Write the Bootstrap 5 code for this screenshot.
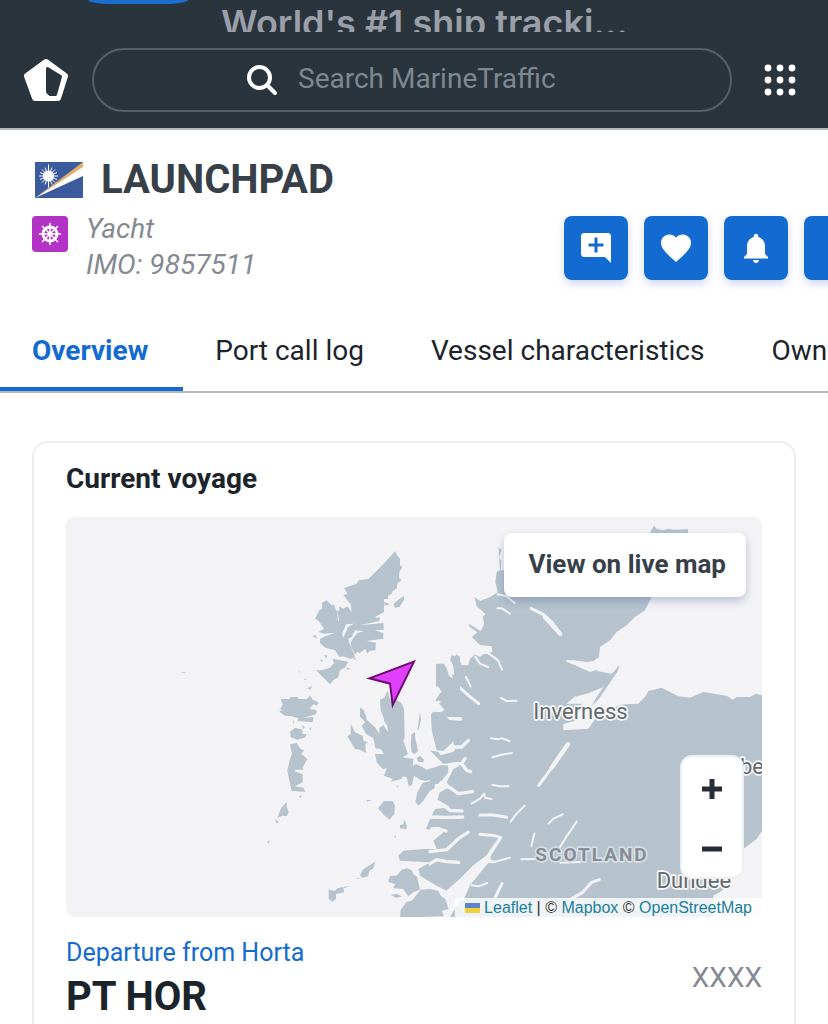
<!DOCTYPE html>
<html lang="en">
<head>
<meta charset="utf-8">
<meta name="viewport" content="width=device-width, initial-scale=1">
<title>LAUNCHPAD</title>
<link rel="stylesheet" href="https://cdn.jsdelivr.net/npm/bootstrap@5.3.0/dist/css/bootstrap.min.css">
<style>
  :root { --ink: #1b232b; --slate: #373f49; --muted-ink: #858a92; --brand: #136bd2; --header: #2a343d; }
  body { font-family: Roboto, "Liberation Sans", sans-serif; font-size: 28px; line-height: 36px; color: var(--ink); background: #fff; }
  svg { display: block; }
  .site-header { background: var(--header); border-bottom: 2px solid #b2b9bc; }
  .promo { height: 32px; }
  .promo-pill { width: 100px; height: 4px; margin-left: 88px; background: #1a6fd0; border-radius: 0 0 24px 24px / 0 0 4px 4px; }
  .promo-text { margin-left: 33px; padding-top: 3px; font: 600 36px/40px Inter, sans-serif; color: #9a9fa9; }
  .header-row { height: 96px; padding: 0 32px 0 24px; }
  .search-pill { height: 64px; margin: 0 32px 0 24px; padding-right: 12px; gap: 20px; border: 2px solid #56606a; }
  .search-pill input { width: 268px; height: 44px; padding: 0 0 4px; border: 0; outline: 0; background: transparent; color: #fff; }
  .search-pill input::placeholder { color: #7f8891; opacity: 1; }
  .plain-btn { padding: 0; border: 0; background: transparent; }
  .vessel { padding: 26px 0 28px 32px; }
  .vessel h1 { font-size: 40px; line-height: 48px; font-weight: 700; color: var(--slate); }
  .vessel-sub { margin-top: 7px; gap: 18px; }
  .vessel-info { font-style: italic; color: var(--muted-ink); }
  .vessel-type { margin-top: 5px; }
  .actions { flex: 0 0 264px; min-width: 0; gap: 16px; padding-top: 5px; }
  .action-btn { flex: 0 0 64px; height: 64px; padding: 0; border: 0; border-radius: 8px; background: var(--brand); color: #fff; box-shadow: 0 4px 8px rgba(40, 80, 190, .22); }
  .tabs { border-bottom: 2px solid #b4babb; }
  .tabs a { padding: 22px 35px 18px 32px; color: var(--ink); text-decoration: none; border-bottom: 4px solid transparent; line-height: 36px; }
  .tabs a.active { color: var(--brand); font-weight: 700; border-color: var(--brand); }
  .voyage { margin: 48px 32px 0; padding: 16px 32px; border: 2px solid #ebecef; border-bottom: 0; border-radius: 16px 16px 0 0; }
  .voyage h2 { font-size: 28px; line-height: 40px; font-weight: 700; margin: 0 0 18px; }
  .map-box { height: 400px; border-radius: 8px; background: #f3f3f5; }
  .land { fill: #b6c3cd; }
  .water-fill { fill: #f3f3f5; }
  .loch { fill: none; stroke: #f3f3f5; stroke-linecap: round; stroke-linejoin: round; }
  .place { font: 400 66px Roboto, sans-serif; fill: #64696f; stroke: #f6f7f8; stroke-width: 10px; paint-order: stroke; stroke-linejoin: round; }
  .region { font-weight: 700; font-size: 57px; letter-spacing: 6px; fill: #868d96; stroke: #d8dee3; }
  .live-map { top: 16px; right: 16px; height: 64px; padding: 0 20px 2px 24px; border: 0; border-radius: 8px; background: #fff; color: var(--slate); font-weight: 700; font-size: 26px; box-shadow: 0 4px 8px rgba(50, 70, 140, .28); }
  .zoom-box { right: 18px; bottom: 38px; width: 64px; height: 124px; border: 2px solid #edf0f3; border-radius: 12px; background: #fff; overflow: hidden; }
  .attribution { right: 0; bottom: 0; height: 19px; padding: 0 10px; gap: 4px; font: 16px/20px "Liberation Sans", sans-serif; color: #333; background: rgba(255, 255, 255, .8); }
  .attribution a { color: #1a7f9d; text-decoration: none; }
  .voyage-ports { padding-top: 18px; }
  .port-link { color: var(--brand); text-decoration: none; font-size: 25px; }
  .port-code { margin-top: 2px; font-size: 40px; line-height: 48px; font-weight: 700; }
  .port-next { color: var(--muted-ink); }
</style>
</head>
<body>
<div class="vh-100 overflow-hidden d-flex flex-column">
  <header class="site-header flex-shrink-0">
    <div class="promo d-flex align-items-start overflow-hidden text-nowrap">
      <span class="promo-pill flex-shrink-0"></span>
      <span class="promo-text">World's #1 ship tracki…</span>
    </div>
    <div class="header-row d-flex align-items-center">
      <a href="#" aria-label="Home">
        <svg width="44" height="44" viewBox="0 0 44 44"><path fill="#fff" stroke="#fff" stroke-width="6" stroke-linejoin="round" d="M22 4 41 18 34 40H11L3 18Z"/><path fill="#2a343d" stroke="#2a343d" stroke-width="3" stroke-linejoin="round" d="M23.500 10.500 36.500 18.500 31.500 36.500H26L23.500 34Z"/></svg>
      </a>
      <label class="search-pill rounded-pill flex-grow-1 d-flex align-items-center justify-content-center">
        <svg width="32" height="32" viewBox="0 0 32 32" fill="none" stroke="#fff" stroke-width="4" stroke-linecap="round"><circle cx="13.500" cy="13.500" r="10.500"/><path d="m21.500 21.500 7.500 7.500"/></svg>
        <input type="text" aria-label="Search MarineTraffic" placeholder="Search MarineTraffic">
      </label>
      <button type="button" class="plain-btn" aria-label="Apps">
        <svg width="32" height="32" viewBox="0 0 32 32" fill="#fff"><circle cx="4" cy="4" r="3.400"/><circle cx="16" cy="4" r="3.400"/><circle cx="28" cy="4" r="3.400"/><circle cx="4" cy="16" r="3.400"/><circle cx="16" cy="16" r="3.400"/><circle cx="28" cy="16" r="3.400"/><circle cx="4" cy="28" r="3.400"/><circle cx="16" cy="28" r="3.400"/><circle cx="28" cy="28" r="3.400"/></svg>
      </button>
    </div>
  </header>

  <section class="vessel flex-shrink-0">
    <div class="d-flex align-items-center gap-3">
      <svg width="53" height="40" viewBox="0 0 53 40" aria-label="Flag of the Marshall Islands"><path fill="#3c5b9e" d="M3 2h48v36H3z"/><path fill="#e0ad6a" d="M3 38 51 2v6Z"/><path fill="#fff" d="M3 38 51 7v9Z"/><circle cx="16.500" cy="16" r="5.500" fill="#fff"/><path stroke="#fff" stroke-width="1" d="M16.500 4.500v23M7 16h19M10 9.500l13 13M23 9.500l-13 13M13 7.500l7 17M20 7.500l-7 17M8 12.500l17 7M25 12.500l-17 7"/></svg>
      <h1 class="mb-0">LAUNCHPAD</h1>
    </div>
    <div class="vessel-sub d-flex align-items-start">
      <svg class="vessel-type flex-shrink-0" width="36" height="36" viewBox="0 0 36 36"><rect width="36" height="36" rx="4" fill="#b233c6"/><g fill="none" stroke="#fff" stroke-linecap="round"><circle cx="18" cy="18" r="7" stroke-width="2.800"/><path stroke-width="1.600" d="M18 7.500v21M7.500 18h21M10.500 10.500l15 15M25.500 10.500l-15 15"/></g><circle cx="18" cy="18" r="2.500" fill="#fff"/></svg>
      <div class="vessel-info flex-grow-1">
        <div>Yacht</div>
        <div>IMO: 9857511</div>
      </div>
      <div class="actions d-flex">
        <button type="button" class="action-btn d-flex align-items-center justify-content-center" aria-label="Add note"><svg width="36" height="36" viewBox="0 0 24 24" fill="currentColor"><path d="M22 4c0-1.100-.9-2-2-2H4c-1.100 0-2 .9-2 2v12c0 1.100.9 2 2 2h14l4 4V4zm-5 7h-4v4h-2v-4H7V9h4V5h2v4h4v2z"/></svg></button>
        <button type="button" class="action-btn d-flex align-items-center justify-content-center" aria-label="Add to favourites"><svg width="36" height="36" viewBox="0 0 24 24" fill="currentColor"><path d="m12 21.350-1.450-1.320C5.400 15.360 2 12.280 2 8.500 2 5.420 4.420 3 7.500 3c1.740 0 3.410.81 4.500 2.090C13.090 3.810 14.760 3 16.500 3 19.580 3 22 5.420 22 8.500c0 3.780-3.400 6.860-8.550 11.540L12 21.350z"/></svg></button>
        <button type="button" class="action-btn d-flex align-items-center justify-content-center" aria-label="Notifications"><svg width="36" height="36" viewBox="0 0 24 24" fill="currentColor"><path d="M12 22c1.100 0 2-.9 2-2h-4c0 1.100.89 2 2 2zm6-6v-5c0-3.070-1.640-5.640-4.500-6.320V4c0-.83-.67-1.500-1.500-1.500s-1.500.67-1.500 1.500v.68C7.630 5.360 6 7.920 6 11v5l-2 2v1h16v-1l-2-2z"/></svg></button>
        <button type="button" class="action-btn" aria-label="More"></button>
      </div>
    </div>
  </section>

  <nav class="tabs d-flex text-nowrap flex-shrink-0">
    <a href="#" class="active">Overview</a>
    <a href="#">Port call log</a>
    <a href="#">Vessel characteristics</a>
    <a href="#">Ownership</a>
  </nav>

  <main class="voyage flex-grow-1">
    <h2>Current voyage</h2>
    <div class="map-box position-relative overflow-hidden">
      <svg width="100%" height="100%" viewBox="0 0 2088 1200" preserveAspectRatio="xMidYMid slice">
        <!-- mainland -->
        <g transform="translate(1092 0)">
          <path class="land" d="M206 92 215 98 207 122 214 130 213 158 200 165 196 195 203 226 180 240 150 252 133 240 140 268 160 285 166 292 158 300 163 320 152 342 117 320 119 330 142 346 125 360 150 384 185 388 187 405 160 412 150 420 135 412 120 425 115 445 95 445 85 420 65 415 60 430 75 450 76 470 66 474 70 490 58 484 50 455 42 440 18 440 18 508 50 510 52 522 30 528 17 550 30 570 36 586 10 584 3 592 5 640 20 700 45 702 70 672 75 700 40 730 50 740 90 746 70 756 50 796 60 808 30 826 20 846 40 858 60 871 15 876 0 906 -10 931 30 931 40 946 10 971 20 996 -20 996 -80 1001 -95 1016 -90 1031 0 1036 -35 1056 -30 1076 20 1106 50 1121 30 1200H850L850 1136 870 1125 895 1106 940 996 980 966 996 941V535L978 530 960 540 920 540 908 548 890 536 820 525 780 542 745 538 695 512 655 522 645 540 625 560 580 562 540 575 500 600 475 635 400 640 400 622 440 612 460 590 505 548 565 460 568 443 540 462 510 455 480 465 440 447 412 430 430 430 470 435 490 432 507 420 510 390 540 370 560 345 590 325 615 300 645 280 665 240 665 160H210Z"/>
          <path class="water-fill" d="M505 450 568 443 540 480 500 540 475 585 445 625 410 635 400 622 440 610 455 560 410 560 435 538 480 525 498 505 505 515 525 490 545 470 500 462Z"/>
          <path class="land" d="M420 558 435 540 478 527 520 510 565 452 540 475 502 465 470 500ZM630 555 640 550 638 560Z"/>
          <g class="loch">
            <path stroke-width="6" d="M203 232 230 238 254 258M202 274 216 274 240 290M135 418 150 440 174 450M158 398 180 412 204 430 216 458M108 480 122 508M213 543 230 552 260 551M412 432 430 440M183 664 205 667 215 664 222 666 238 672M187 721 215 713 246 708M187 803 208 808 235 808M125 860 150 845 163 830 165 842 184 846M356 920 370 905 398 892M313 950 304 986M390 990 412 955 440 914M274 1027 320 1026M392 1037 450 1035M190 1036 240 1022M242 914 258 892 284 866M125 1105 145 1108 172 1098"/>
            <path stroke-width="9" d="M304 275 340 292 365 315 392 352M82 505 115 535 146 560M20 560 50 592 92 606M150 894 190 894 230 901M425 1145 458 1126 485 1096 508 1088M326 805 345 780 382 728 414 680M150 952 195 956 212 962 175 1020 140 1060 90 1120 60 1160M170 1032 190 1034M216 1100 196 1140"/>
            <path stroke-width="13" d="M365 752 414 682M345 300 390 350"/>
            <path stroke-width="10" d="M40 540 20 560 60 604 90 606M0 735 40 725 70 690 95 690 115 670M0 740 60 740 95 740 105 725M95 740 110 760 122 764M50 760 62 740M0 805 45 808 60 812 85 830 128 824M40 772 25 815 0 830M0 870 20 860 45 868 60 880 96 882M0 900 50 901 98 900M0 950 20 935 48 942M0 1004 50 998 85 965 114 946M0 1040 20 1028 50 1034 86 1036M0 1108 30 1120 60 1140"/>
          </g>
          <path class="water-fill" d="M205 960 180 1005 182 1030 155 1062 120 1105 100 1150 50 1160 50 1120 90 1085 130 1045 170 1015ZM-60 610 0 600 10 690 30 710 70 675 60 715 30 745 65 750 50 790 25 815 25 840 15 870-20 900-30 860-10 780-60 740ZM50 1120 110 1120 60 1200H30Z"/>
          <path class="land" d="M0 700 25 705 32 715 60 707 90 701 90 733 40 741ZM672 25 680 36 700 40 715 35 730 38 774 37V48H660ZM0 770 40 756 45 772 25 800 0 805Z"/>
        </g>
        <!-- Lewis, Harris and small isles -->
        <g class="land" transform="translate(582 0)">
          <path d="M405 103 413 118 420 124 420 145 427 150 418 165 417 182 424 190 412 200 410 215 398 222 396 230 384 236 384 246 372 246 372 285 345 300 350 303 360 300 358 312 300 325 370 318 372 338 345 340 370 348 370 365 320 372 348 377 346 400 328 402 322 410 316 395 300 408 292 405 285 412 278 395 285 420 270 426 250 418 238 420 225 400 196 392 180 378 180 366 195 358 225 347 192 350 175 345 192 335 185 325 174 310 165 305 178 280 187 275 186 258 200 250 215 265 222 262 228 280 238 282 238 268 250 275 262 268 275 285 272 262 250 235 262 230 252 213 290 200 296 190 325 186 370 142Z"/>
          <path d="M218 425 265 434 255 452 240 460 235 480 220 490 210 502 178 470 168 460 185 460 210 452 222 438ZM372 255 390 262 374 266ZM400 262 410 252 432 236 432 248 418 270 405 272ZM157 356 168 355 170 366ZM180 428 190 428 184 434ZM192 415 202 415 198 426ZM278 420 288 424 284 430ZM282 435 296 442ZM262 450 270 455 260 460ZM132 486 142 485 134 490ZM142 514 158 506 150 518ZM64 545 85 550 92 540 112 540 125 555 140 548 150 535 158 548 172 555 168 565 158 562 150 576 170 580 168 592 120 605 95 598 75 596 58 585 70 575ZM300 572 312 580 316 605 300 600ZM574 430 590 412 600 420V600L560 600 545 585 570 565 532 550 545 525 530 500 530 442 548 440 560 455 566 475 585 490 580 450Z"/>
          <path d="M382 520 375 540 360 550 362 580 378 620 432 620 430 580 420 558 405 550 398 566 392 555Z"/>
          <path class="water-fill" d="M258 322 282 320 264 330 258 345 250 362 246 350ZM285 340 312 343 292 348 280 362 272 378 276 398 285 412 268 378 265 365 275 360ZM230 275 238 312 234 310Z"/>
          <path d="M115 464 120 463 118 467ZM-235 465h12v2h-12z"/>
        </g>
        <!-- Uist, Skye, Rum, Coll, Tiree and Mull -->
        <g class="land" transform="translate(582 546)">
          <path d="M62 4 72 0 150 0 160 18 140 28 168 40 165 46 120 46 112 38 96 48 92 36 80 34 75 28 58 34 70 15ZM115 58 160 54 158 70 112 66ZM168 5 176 12 168 22ZM90 98 105 86 128 92 126 104 140 106 136 115 112 122 92 115ZM90 136 110 132 120 148 132 155 124 165 142 180 128 205 130 212 105 212 106 218 128 225 128 250 105 262 130 266 136 278 95 276 88 245 82 215 90 180 96 165ZM80 308 80 322 86 340 80 352 68 350 52 356 62 330ZM45 360 56 368 50 374ZM20 430 28 424 28 433ZM118 290 126 290 120 298ZM125 78 135 85 130 90ZM148 88 155 85 152 94ZM98 60 102 70 99 75Z"/>
          <path d="M360 0 368 25 372 45 372 65 382 80 384 100 370 78 358 88 358 105 345 85 320 62 318 50 305 28 300 32 302 55 315 70 305 80 318 105 340 118 346 148 362 150 372 165 345 165 350 190 368 210 380 208 372 230 398 240 392 248 424 240 428 232 440 235 446 262 456 258 462 230 480 242 500 246 520 238 545 246 565 220 564 200 545 198 500 212 480 200 468 196 458 200 460 180 428 175 444 165 430 125 434 115 432 30 424 12 405 0ZM272 75 285 100 308 110 310 125 324 130 316 135 318 162 300 152 285 150 272 128 262 112 272 105ZM455 105 465 100 466 120 474 155 465 165 455 160 452 135ZM480 40 483 62 475 95 472 92ZM470 178 480 170 492 182 490 190 475 188ZM524 242 524 268 510 275 488 308 475 320 466 308 472 280 488 252ZM354 328 372 306 398 306 405 320 403 345 388 362 374 350ZM432 362 440 378 440 390 420 388 420 378 430 376ZM402 412 408 410 408 416ZM408 260 416 260 412 266ZM318 304 338 302 322 308ZM498 385 510 380 512 390 502 392ZM346 488 340 508 328 515 325 532 308 536 300 530 308 512ZM288 538 300 536 292 540ZM252 563 272 562 252 567ZM206 572 225 576 232 568 250 564 252 580 228 585 228 600 218 608 206 600ZM385 548 390 530 410 530 425 512 442 508 455 514 460 525 472 535 480 572 460 580 445 592 430 570 400 568 405 556ZM392 587 410 585 426 592 408 597ZM482 572 510 570 535 576 542 590 556 600 566 630 545 635 552 652 420 656 422 632 440 608 455 605Z"/>
        </g>
        <g>
          <text class="place" x="1402" y="605">Inverness</text>
          <text class="place" x="2022" y="772">be</text>
          <text class="place" x="1772" y="1114">Dundee</text>
          <text class="place region" x="1408" y="1031">SCOTLAND</text>
        </g>
        <path d="M910 484 1044 434 980 564 972 500Z" fill="#e040fb" stroke="#6a0f70" stroke-width="6"/>
      </svg>
      <button type="button" class="live-map position-absolute">View on live map</button>
      <div class="zoom-box position-absolute d-flex flex-column">
        <button type="button" class="plain-btn flex-fill d-flex align-items-center justify-content-center pt-1" aria-label="Zoom in"><svg width="20" height="20" viewBox="0 0 20 20"><path fill="#252d38" d="M7.500 0h5v7.500H20v5h-7.500V20h-5v-7.500H0v-5h7.500z"/></svg></button>
        <button type="button" class="plain-btn flex-fill d-flex align-items-center justify-content-center pt-1" aria-label="Zoom out"><svg width="20" height="20" viewBox="0 0 20 20"><path fill="#252d38" d="M0 7.500h20v5H0z"/></svg></button>
      </div>
      <div class="attribution position-absolute d-flex align-items-center text-nowrap">
        <svg width="15" height="10" viewBox="0 0 15 10"><path fill="#5b83c9" d="M0 0h15v5H0z"/><path fill="#efd038" d="M0 5h15v5H0z"/></svg>
        <span><a href="#">Leaflet</a> | © <a href="#">Mapbox</a> © <a href="#">OpenStreetMap</a></span>
      </div>
    </div>
    <div class="voyage-ports d-flex align-items-center justify-content-between">
      <div>
        <a href="#" class="port-link d-block">Departure from Horta</a>
        <div class="port-code">PT HOR</div>
      </div>
      <div class="port-next">XXXX</div>
    </div>
  </main>
</div>
<script src="https://cdn.jsdelivr.net/npm/bootstrap@5.3.0/dist/js/bootstrap.bundle.min.js"></script>
</body>
</html>
